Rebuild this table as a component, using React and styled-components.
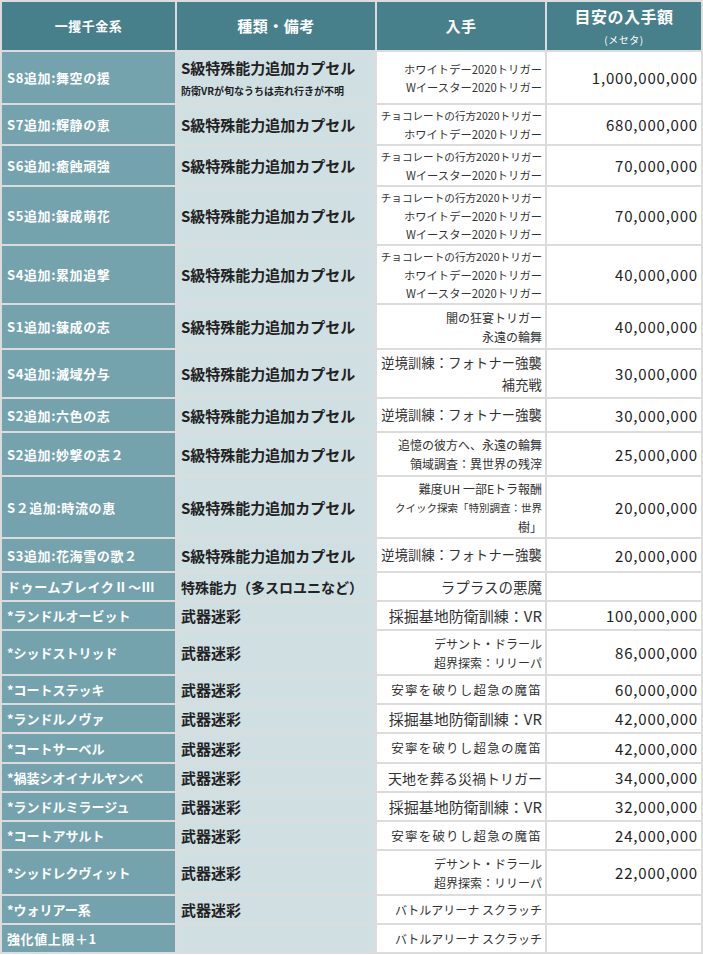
import React from "react";
import styled, { createGlobalStyle } from "styled-components";

const GlobalStyle = createGlobalStyle`
  html, body {
    margin: 0;
    padding: 0;
    background: #ffffff;
  }
  body {
    font-family: "Noto Sans CJK JP", "Noto Sans", sans-serif;
    color: #333;
  }
`;

const Table = styled.table`
  width: 701px;
  table-layout: fixed;
  border-collapse: collapse;
  border: 2px solid #dcdcdc;
`;

const Row = styled.tr`
  height: ${p => p.h}px;
`;

const HeadCell = styled.th`
  background: #477f8b;
  color: #fff;
  font-weight: bold;
  font-size: ${p => p.size || 15}px;
  text-align: center;
  vertical-align: middle;
  border: 2px solid #dcdcdc;
  padding: 0;
  line-height: 1.3;
  letter-spacing: 0.5px;
`;

const HeadSub = styled.div`
  font-size: 10px;
  font-weight: normal;
  margin-top: 6px;
`;

const NameCell = styled.td`
  background: #74a3ad;
  color: #fff;
  font-weight: bold;
  font-size: 13px;
  letter-spacing: ${p => (p.tight ? 0 : 0.6)}px;
  padding: 0 0 0 5px;
  vertical-align: middle;
  border: 2px solid #dcdcdc;
  white-space: nowrap;
  overflow: hidden;
`;

const TypeCell = styled.td`
  background: #d0dfe2;
  color: #222;
  font-weight: bold;
  font-size: ${p => p.size || 15}px;
  padding: 0 0 0 4px;
  vertical-align: middle;
  border: 2px solid #dcdcdc;
  white-space: nowrap;
`;

const TypeNote = styled.div`
  font-size: 10px;
  margin-top: 5px;
`;

const SourceCell = styled.td`
  background: #fff;
  color: #333;
  font-size: ${p => p.size || 12}px;
  line-height: ${p => p.lh || 18}px;
  letter-spacing: ${p => p.spacing || 0}px;
  text-align: right;
  padding: 0 3px 0 0;
  vertical-align: middle;
  border: 2px solid #dcdcdc;
  overflow: hidden;
`;

const SourceLine = styled.div`
  font-size: ${p => (p.size ? `${p.size}px` : "inherit")};
  white-space: nowrap;
`;

const PriceCell = styled.td`
  background: #fff;
  color: #222;
  font-size: 15px;
  text-align: right;
  padding: 0 3px 0 0;
  vertical-align: middle;
  border: 2px solid #dcdcdc;
  letter-spacing: 0.8px;
`;

const CAPSULE = "S級特殊能力追加カプセル";
const CAMO = "武器迷彩";
const WD = "ホワイトデー2020トリガー";
const WE = "Wイースター2020トリガー";
const CH = "チョコレートの行方2020トリガー";
const QUICK = "クイック探索「特別調査：世界";
const GYAKU = "逆境訓練：フォトナー強襲";
const VR = "採掘基地防衛訓練：VR";
const ANNEI = "安寧を破りし超急の魔笛";
const DESANT = ["デサント・ドラール", "超界探索：リリーパ"];
const BATTLE = "バトルアリーナ スクラッチ";

// lines that are set smaller than the rest of their cell
const smallLines = { [CH]: 10.6, [QUICK]: 10.5 };

const rows = [
  { h: 53, name: "S8追加:舞空の援", type: CAPSULE, note: "防衛VRが旬なうちは売れ行きが不明", src: [WD, WE], size: 11.3, price: "1,000,000,000" },
  { h: 41, name: "S7追加:輝静の恵", type: CAPSULE, src: [CH, WD], size: 11.3, price: "680,000,000" },
  { h: 41, name: "S6追加:癒蝕頑強", type: CAPSULE, src: [CH, WE], size: 11.3, price: "70,000,000" },
  { h: 59, name: "S5追加:錬成萌花", type: CAPSULE, src: [CH, WD, WE], size: 11.3, price: "70,000,000" },
  { h: 59, name: "S4追加:累加追撃", type: CAPSULE, src: [CH, WD, WE], size: 11.3, price: "40,000,000" },
  { h: 45, name: "S1追加:錬成の志", type: CAPSULE, src: ["闇の狂宴トリガー", "永遠の輪舞"], lh: 19, price: "40,000,000" },
  { h: 49, name: "S4追加:滅域分与", type: CAPSULE, src: [GYAKU, "補充戦"], size: 13.2, lh: 22, spacing: 0.2, price: "30,000,000" },
  { h: 34, name: "S2追加:六色の志", type: CAPSULE, src: [GYAKU], size: 13.2, spacing: 0.2, price: "30,000,000" },
  { h: 44, name: "S2追加:妙撃の志２", type: CAPSULE, src: ["追憶の彼方へ、永遠の輪舞", "領域調査：異世界の残滓"], lh: 19, price: "25,000,000" },
  { h: 62, name: "S２追加:時流の恵", type: CAPSULE, src: ["難度UH 一部Eトラ報酬", QUICK, "樹」"], lh: 19, price: "20,000,000" },
  { h: 34, name: "S3追加:花海雪の歌２", type: CAPSULE, src: [GYAKU], size: 13.2, spacing: 0.2, price: "20,000,000" },
  { h: 29, name: "ドゥームブレイクⅡ～Ⅲ", type: "特殊能力（多スロユニなど）", typeSize: 14, src: ["ラプラスの悪魔"], size: 14.5, price: "" },
  { h: 29, name: "*ランドルオービット", type: CAMO, src: [VR], size: 15, price: "100,000,000" },
  { h: 45, name: "*シッドストリッド", type: CAMO, src: DESANT, lh: 19, price: "86,000,000" },
  { h: 29, name: "*コートステッキ", type: CAMO, src: [ANNEI], size: 12.5, spacing: 1.2, price: "60,000,000" },
  { h: 29, name: "*ランドルノヴァ", type: CAMO, src: [VR], size: 15, price: "42,000,000" },
  { h: 30, name: "*コートサーベル", type: CAMO, src: [ANNEI], size: 12.5, spacing: 1.2, price: "42,000,000" },
  { h: 29, name: "*禍装シオイナルヤンベ", type: CAMO, src: ["天地を葬る災禍トリガー"], size: 14, price: "34,000,000" },
  { h: 29, name: "*ランドルミラージュ", type: CAMO, src: [VR], size: 15, price: "32,000,000" },
  { h: 29, name: "*コートアサルト", type: CAMO, src: [ANNEI], size: 12.5, spacing: 1.2, price: "24,000,000" },
  { h: 45, name: "*シッドレクヴィット", type: CAMO, src: DESANT, lh: 19, price: "22,000,000" },
  { h: 29, name: "*ウォリアー系", type: CAMO, src: [BATTLE], price: "" },
  { h: 29, name: "強化値上限＋1", type: "", src: [BATTLE], price: "" }
];

export default function App() {
  return (
    <>
      <GlobalStyle />
      <Table>
        <colgroup>
          <col style={{ width: 175 }} />
          <col style={{ width: 200 }} />
          <col style={{ width: 170 }} />
          <col style={{ width: 156 }} />
        </colgroup>
        <thead>
          <Row h={50}>
            <HeadCell size={13}>一攫千金系</HeadCell>
            <HeadCell>種類・備考</HeadCell>
            <HeadCell>入手</HeadCell>
            <HeadCell size={16}>
              目安の入手額
              <HeadSub>(メセタ)</HeadSub>
            </HeadCell>
          </Row>
        </thead>
        <tbody>
          {rows.map((r, i) => (
            <Row key={i} h={r.h}>
              <NameCell tight={r.name.startsWith("*")}>{r.name}</NameCell>
              <TypeCell size={r.typeSize}>
                {r.type}
                {r.note && <TypeNote>{r.note}</TypeNote>}
              </TypeCell>
              <SourceCell size={r.size} lh={r.lh} spacing={r.spacing}>
                {r.src.map((s, j) => (
                  <SourceLine key={j} size={smallLines[s]}>
                    {s}
                  </SourceLine>
                ))}
              </SourceCell>
              <PriceCell>{r.price}</PriceCell>
            </Row>
          ))}
        </tbody>
      </Table>
    </>
  );
}
